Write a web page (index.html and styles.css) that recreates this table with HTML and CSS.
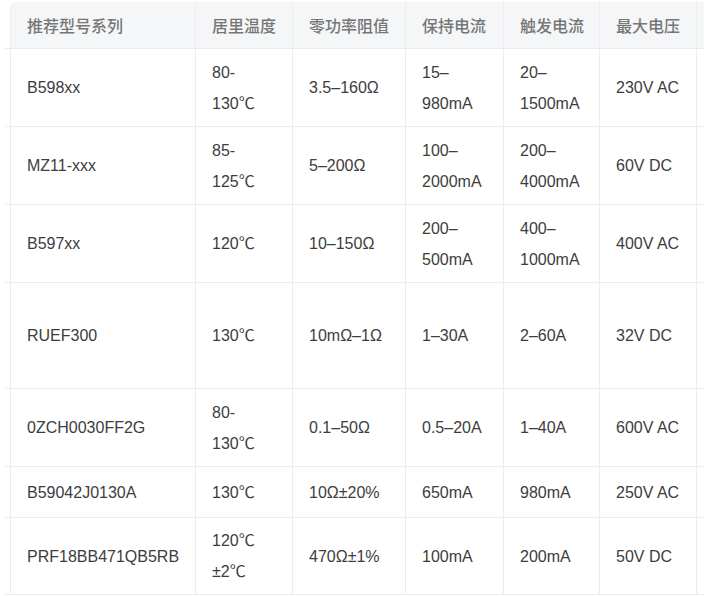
FILE: index.html
```html
<!DOCTYPE html>
<html lang="zh-CN">
<head>
<meta charset="utf-8">
<title>推荐型号系列</title>
<link rel="stylesheet" href="styles.css">
</head>
<body>
<div class="wrap">
  <table class="spec">
    <colgroup>
      <col class="c0"><col class="c1"><col class="c2"><col class="c3"><col class="c4"><col class="c5"><col class="c6"><col class="c7">
    </colgroup>
    <thead>
      <tr class="r-head">
        <th class="gap"></th>
        <th class="first">推荐型号系列</th>
        <th>居里温度</th>
        <th>零功率阻值</th>
        <th>保持电流</th>
        <th>触发电流</th>
        <th>最大电压</th>
        <th></th>
      </tr>
    </thead>
    <tbody>
      <tr class="r78">
        <td class="gap"></td><td class="first">B598xx</td><td>80-130℃</td><td>3.5–160Ω</td><td>15–980mA</td><td>20–1500mA</td><td>230V AC</td><td></td>
      </tr>
      <tr class="r78">
        <td class="gap"></td><td class="first">MZ11-xxx</td><td>85-125℃</td><td>5–200Ω</td><td>100–2000mA</td><td>200–4000mA</td><td>60V DC</td><td></td>
      </tr>
      <tr class="r78">
        <td class="gap"></td><td class="first">B597xx</td><td>120℃</td><td>10–150Ω</td><td>200–500mA</td><td>400–1000mA</td><td>400V AC</td><td></td>
      </tr>
      <tr class="r106">
        <td class="gap"></td><td class="first">RUEF300</td><td>130℃</td><td>10mΩ–1Ω</td><td>1–30A</td><td>2–60A</td><td>32V DC</td><td></td>
      </tr>
      <tr class="r78">
        <td class="gap"></td><td class="first">0ZCH0030FF2G</td><td>80-130℃</td><td>0.1–50Ω</td><td>0.5–20A</td><td>1–40A</td><td>600V AC</td><td></td>
      </tr>
      <tr class="r51">
        <td class="gap"></td><td class="first">B59042J0130A</td><td>130℃</td><td>10Ω±20%</td><td>650mA</td><td>980mA</td><td>250V AC</td><td></td>
      </tr>
      <tr class="r77">
        <td class="gap"></td><td class="first">PRF18BB471QB5RB</td><td>120℃ ±2℃</td><td>470Ω±1%</td><td>100mA</td><td>200mA</td><td>50V DC</td><td></td>
      </tr>
    </tbody>
  </table>
</div>
</body>
</html>
```

FILE: styles.css
```css
html, body {
  margin: 0;
  padding: 0;
  background: #ffffff;
}

body {
  font-family: "Liberation Sans", Arial, "Noto Sans CJK SC", sans-serif;
  font-size: 16px;
  color: #3d3d3d;
}

.wrap {
  width: 704px;
  height: 596px;
  overflow: hidden;
  padding-top: 2px;
  box-sizing: border-box;
}

.spec {
  border-collapse: separate;
  border-spacing: 0;
  table-layout: fixed;
  width: 820px;
  margin-left: 5px;
}

.c0 { width: 5px; }
.c1 { width: 186px; }
.c2 { width: 97px; }
.c3 { width: 113px; }
.c4 { width: 98px; }
.c5 { width: 96px; }
.c6 { width: 97px; }
.c7 { width: 128px; }

.spec th,
.spec td {
  box-sizing: border-box;
  padding: 0 16px;
  text-align: left;
  vertical-align: middle;
  line-height: 31px;
  border-right: 1px solid #ececec;
  border-bottom: 1px solid #ececec;
}

.spec th {
  padding-right: 12px;
  background: #f5f6f8;
  color: #767676;
  font-weight: 500;
  font-family: "Noto Sans CJK SC", "Liberation Sans", sans-serif;
  white-space: nowrap;
}

.spec .gap {
  padding: 0;
  border-right: none;
  background: #ffffff;
}

.spec th.first,
.spec td.first {
  border-left: 1px solid #ececec;
}

.spec th.first {
  border-top-left-radius: 8px;
}

.r-head { height: 47px; }
.r78 { height: 78px; }
.r106 { height: 106px; }
.r51 { height: 51px; }
.r77 { height: 77px; }
```
